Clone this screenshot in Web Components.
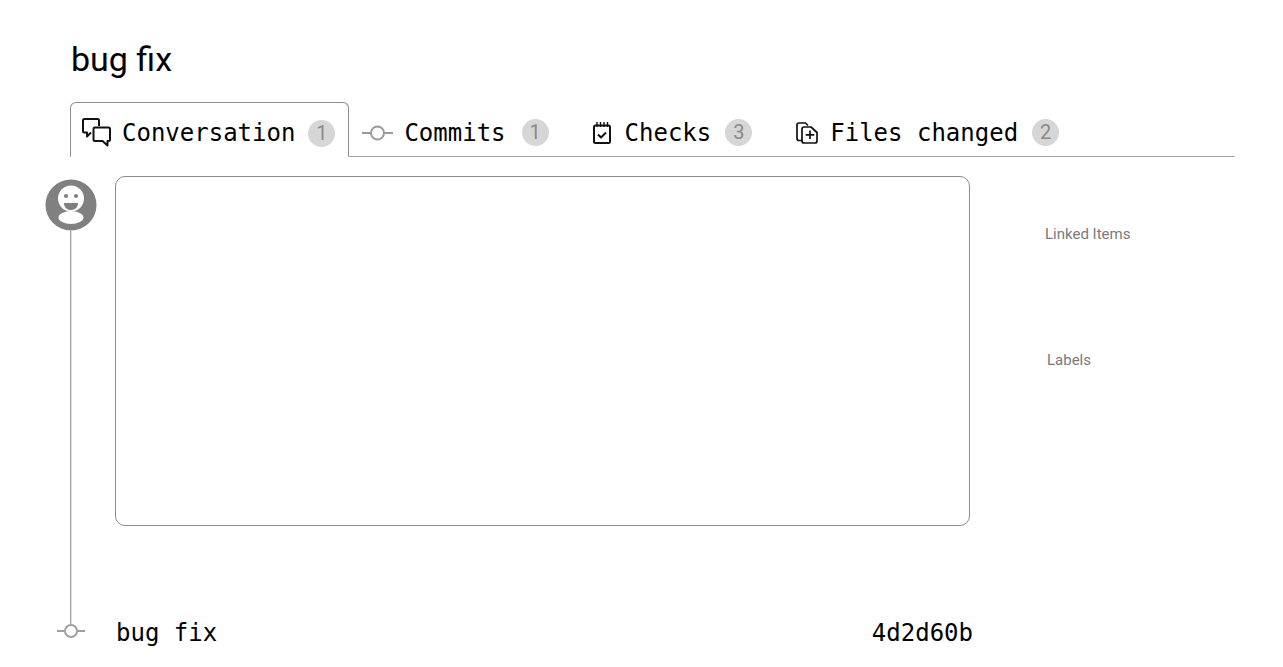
<!DOCTYPE html>
<html>
<head>
<meta charset="utf-8">
<title>bug fix</title>
<style>
    html, body { margin: 0; background: #fff; }
</style>
</head>
<body>
<pr-page>
    <span slot="title">bug fix</span>
    <pr-tabs slot="tabs">
        <pr-tab active count="1" gap="10" pad-left="11" pad-right="13" badge-gap="13">
            <svg slot="icon" width="30" height="30" viewBox="0 0 30 30" fill="none" stroke="#111" stroke-width="2" stroke-linejoin="round"><path d="M17 8V2.500Q17 1 15.500 1H2.500Q1 1 1 2.500V13Q1 14.500 2.500 14.500H5V18.500L9 14.500"/><path d="M13 9.500H26.500Q28 9.500 28 11V21.500Q28 23 26.500 23H25.500V27.500L20.500 23H13Q11.500 23 11.500 21.500V11Q11.500 9.500 13 9.500Z"/></svg>
            Conversation
        </pr-tab>
        <pr-tab count="1" gap="11" pad-left="13" pad-right="16" badge-gap="16">
            <svg slot="icon" width="31" height="16" viewBox="0 0 31 16" fill="none" stroke="#999" stroke-width="2"><path d="M0 8H8.500M22.500 8H31"/><circle cx="15.500" cy="8" r="6.500"/></svg>
            Commits
        </pr-tab>
        <pr-tab count="3" gap="14" pad-left="28" pad-right="14" badge-gap="14">
            <svg slot="icon" width="18" height="22" viewBox="0 0 18 22" fill="none" stroke="#111" stroke-width="2" stroke-linejoin="round"><rect x="1" y="3.500" width="16" height="17.500" rx="1.500"/><path d="M4 0V5M7.500 0V5M11 0V5M14.500 0V5" stroke-width="1.400"/><path d="M5 12.500L8 15.500L13 10.500"/></svg>
            Checks
        </pr-tab>
        <pr-tab count="2" gap="12" pad-left="30" pad-right="14" badge-gap="14">
            <svg slot="icon" width="22" height="22" viewBox="0 0 22 22" fill="none" stroke="#111" stroke-width="1.700" stroke-linejoin="round"><path d="M6.500 18.500H3C1.800 18.500 1 17.700 1 16.500V3C1 1.800 1.800 1 3 1H9.500L12 3.500"/><path d="M8 5H15L21 10.500V19C21 20.200 20.200 21 19 21H8C6.800 21 6 20.200 6 19V7C6 5.800 6.800 5 8 5Z"/><path d="M14 8.500V17M9.700 12.800H18.300"/></svg>
            Files changed
        </pr-tab>
    </pr-tabs>
    <pr-timeline slot="main">
        <pr-avatar slot="avatar"></pr-avatar>
        <pr-card slot="card"></pr-card>
        <pr-commit slot="commit" sha="4d2d60b">bug fix</pr-commit>
    </pr-timeline>
    <pr-sidebar slot="side">
        <span slot="linked">Linked Items</span>
        <span slot="labels">Labels</span>
    </pr-sidebar>
</pr-page>

<script>
(function(){
    // Outer page: title, tab strip, then timeline + sidebar columns
    class PrPage extends HTMLElement {
        constructor(){
            super();
            this.attachShadow({mode: 'open'});
            this.shadowRoot.innerHTML = `
                <style>
                    :host { display: block; width: 1283px; height: 667px; overflow: hidden; box-sizing: border-box; padding: 39px 48px 0 45px; font-family: Roboto, sans-serif; }
                    h1 { margin: 0 0 0 26px; font: 400 34px/41px Roboto, sans-serif; color: #000; }
                    .tabs { margin: 22px 0 0 25px; }
                    .body { display: flex; margin-top: 19px; }
                </style>
                <h1><slot name="title"></slot></h1>
                <div class="tabs"><slot name="tabs"></slot></div>
                <div class="body">
                    <slot name="main"></slot>
                    <slot name="side"></slot>
                </div>
            `;
        }
    }
    customElements.define('pr-page', PrPage);

    class PrTabs extends HTMLElement {
        constructor(){
            super();
            this.attachShadow({mode: 'open'});
            this.shadowRoot.innerHTML = `
                <style>
                    :host { display: flex; height: 55px; box-sizing: border-box; border-bottom: 1px solid #a6a6a6; }
                </style>
                <slot></slot>
            `;
        }
    }
    customElements.define('pr-tabs', PrTabs);

    class PrTab extends HTMLElement {
        constructor(){
            super();
            this.attachShadow({mode: 'open'});
            const count = this.getAttribute('count');
            this.shadowRoot.innerHTML = `
                <style>
                    :host { display: flex; align-items: center; box-sizing: border-box; height: 54px; padding: 7px ${this.getAttribute('pad-right')}px 0 ${this.getAttribute('pad-left')}px; font: 400 24px/30px "DejaVu Sans Mono", monospace; color: #000; white-space: nowrap; }
                    :host([active]) { height: 55px; border: 1px solid #8c8c8c; border-bottom: 1px solid #fff; border-radius: 6px 6px 0 0; }
                    .icon { display: flex; margin-right: ${this.getAttribute('gap')}px; }
                    .badge { display: flex; align-items: center; justify-content: center; width: 27px; height: 27px; margin-left: ${this.getAttribute('badge-gap')}px; border-radius: 50%; background: #d6d6d6; color: #8a8a8a; font: 400 20px/27px Roboto, sans-serif; }
                </style>
                <span class="icon"><slot name="icon"></slot></span>
                <slot></slot>
                <span class="badge">${count}</span>
            `;
        }
    }
    customElements.define('pr-tab', PrTab);

    // Rail on the left links the avatar to each commit
    class PrTimeline extends HTMLElement {
        constructor(){
            super();
            this.attachShadow({mode: 'open'});
            this.shadowRoot.innerHTML = `
                <style>
                    :host { display: grid; grid-template-columns: 52px 855px; column-gap: 18px; grid-template-rows: 350px 85px 40px; width: 925px; }
                    .rail { grid-column: 1; grid-row: 1 / 4; display: flex; flex-direction: column; align-items: center; padding: 3px 0 26px; }
                    .line { flex: 1; width: 1px; margin-right: 1px; background: #a3a3a3; border-right: 1px solid #ddd; }
                    .card { grid-column: 2; grid-row: 1; display: flex; }
                    .commit { grid-column: 1 / 3; grid-row: 3; }
                </style>
                <div class="rail"><slot name="avatar"></slot><div class="line"></div></div>
                <div class="card"><slot name="card"></slot></div>
                <div class="commit"><slot name="commit"></slot></div>
            `;
        }
    }
    customElements.define('pr-timeline', PrTimeline);

    class PrAvatar extends HTMLElement {
        constructor(){
            super();
            this.attachShadow({mode: 'open'});
            this.shadowRoot.innerHTML = `
                <style>:host { display: block; width: 52px; height: 52px; } svg { display: block; }</style>
                <svg width="52" height="52" viewBox="0 0 52 52">
                    <circle cx="26" cy="26" r="25.500" fill="#808080"/>
                    <ellipse cx="26" cy="38.500" rx="12.500" ry="6.500" fill="#fff"/>
                    <ellipse cx="26" cy="19.500" rx="13" ry="13" fill="#fff"/>
                    <circle cx="21" cy="17" r="2.100" fill="#808080"/>
                    <circle cx="31" cy="17" r="2.100" fill="#808080"/>
                    <path d="M19 24H33C33 28.500 29.800 31 26 31C22.200 31 19 28.500 19 24Z" fill="#808080"/>
                </svg>
            `;
        }
    }
    customElements.define('pr-avatar', PrAvatar);

    class PrCard extends HTMLElement {
        constructor(){
            super();
            this.attachShadow({mode: 'open'});
            this.shadowRoot.innerHTML = `
                <style>:host { display: block; flex: 1; box-sizing: border-box; border: 1px solid #8c8c8c; border-radius: 10px; }</style>
                <slot></slot>
            `;
        }
    }
    customElements.define('pr-card', PrCard);

    class PrCommit extends HTMLElement {
        constructor(){
            super();
            this.attachShadow({mode: 'open'});
            this.shadowRoot.innerHTML = `
                <style>
                    :host { display: flex; align-items: center; height: 40px; font: 400 24px/30px "DejaVu Sans Mono", monospace; color: #000; }
                    svg { margin-left: 12px; flex: none; }
                    .msg { margin-left: 31px; padding-top: 3px; }
                    .sha { margin-left: auto; margin-right: -3px; padding-top: 3px; }
                </style>
                <svg width="28" height="16" viewBox="0 0 28 16" fill="none" stroke="#a0a0a0" stroke-width="2"><path d="M0 8H7.500M20.500 8H28"/><circle cx="14" cy="8" r="6"/></svg>
                <span class="msg"><slot></slot></span>
                <span class="sha">${this.getAttribute('sha')}</span>
            `;
        }
    }
    customElements.define('pr-commit', PrCommit);

    class PrSidebar extends HTMLElement {
        constructor(){
            super();
            this.attachShadow({mode: 'open'});
            this.shadowRoot.innerHTML = `
                <style>
                    :host { display: block; margin-left: 75px; padding-top: 48px; font: 400 15px/20px Roboto, sans-serif; color: #7a7a7a; }
                    .labels { margin: 106px 0 0 2px; }
                </style>
                <div><slot name="linked"></slot></div>
                <div class="labels"><slot name="labels"></slot></div>
            `;
        }
    }
    customElements.define('pr-sidebar', PrSidebar);
})();
</script>
</body>
</html>
